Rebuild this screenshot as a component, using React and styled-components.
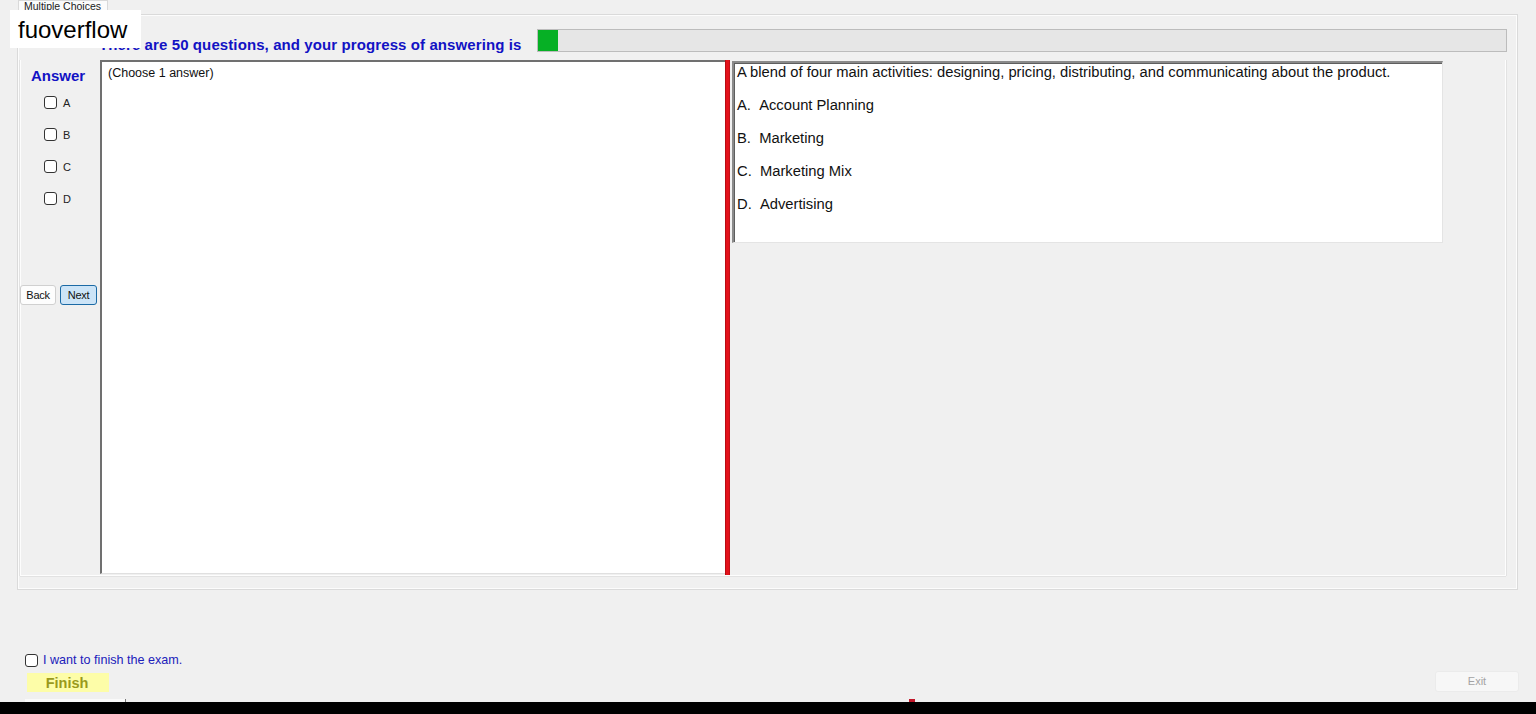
import React from "react";
import styled, { createGlobalStyle } from "styled-components";

const GlobalStyle = createGlobalStyle`
  html, body {
    margin: 0;
    padding: 0;
    background: #f0f0f0;
  }
  body {
    font-family: "Liberation Sans", Arial, sans-serif;
    overflow: hidden;
  }
`;

const OPTIONS = [
  { key: "A", text: "Account Planning" },
  { key: "B", text: "Marketing" },
  { key: "C", text: "Marketing Mix" },
  { key: "D", text: "Advertising" },
];

export default function App() {
  return (
    <>
      <GlobalStyle />
      <Page>
        <Watermark>fuoverflow</Watermark>
        <TabStrip>
          <Tab>Multiple Choices</Tab>
        </TabStrip>
        <TabPage>
          <Header>
            <Title>There are 50 questions, and your progress of answering is</Title>
            <Progress>
              <ProgressFill style={{ width: `${(1 / 50) * 100}%` }} />
            </Progress>
          </Header>
          <Body>
            <AnswerColumn>
              <AnswerLabel>Answer</AnswerLabel>
              <Choices>
                {OPTIONS.map((o) => (
                  <Choice key={o.key}>
                    <Box />
                    <span>{o.key}</span>
                  </Choice>
                ))}
              </Choices>
              <NavRow>
                <NavButton>Back</NavButton>
                <NavButton $primary>Next</NavButton>
              </NavRow>
            </AnswerColumn>
            <ListBox>(Choose 1 answer)</ListBox>
            <Splitter />
            <QuestionArea>
              <QuestionPanel>
                <Line>
                  A blend of four main activities: designing, pricing,
                  distributing, and communicating about the product.
                </Line>
                {OPTIONS.map((o) => (
                  <Line key={o.key}>
                    {o.key}.&nbsp;&nbsp;{o.text}
                  </Line>
                ))}
              </QuestionPanel>
            </QuestionArea>
          </Body>
        </TabPage>
        <Footer>
          <FinishBlock>
            <FinishCheck>
              <Box />
              <span>I want to finish the exam.</span>
            </FinishCheck>
            <FinishButton>Finish</FinishButton>
          </FinishBlock>
          <ExitButton>Exit</ExitButton>
        </Footer>
        <Strip>
          <StripTrack />
          <StripMark />
        </Strip>
        <BlackBar />
      </Page>
    </>
  );
}

const Page = styled.div`
  position: relative;
  width: 1536px;
  height: 714px;
  display: flex;
  flex-direction: column;
  background: #f0f0f0;
`;

const Watermark = styled.div`
  position: absolute;
  left: 10px;
  top: 10px;
  width: 131px;
  height: 38px;
  background: #fff;
  color: #000;
  font-size: 24px;
  line-height: 40px;
  padding-left: 8px;
  box-sizing: border-box;
  z-index: 5;
`;

const TabStrip = styled.div`
  height: 14px;
  display: flex;
  padding-left: 18px;
`;

const Tab = styled.div`
  width: 90px;
  height: 15px;
  box-sizing: border-box;
  background: #fbfbfb;
  border: 1px solid #d9d9d9;
  border-bottom: none;
  font-size: 10.5px;
  line-height: 10px;
  color: #1a1a1a;
  padding-left: 5px;
  overflow: hidden;
  position: relative;
  z-index: 1;
`;

const TabPage = styled.div`
  height: 576px;
  margin: 0 18px 0 17px;
  box-sizing: border-box;
  border: 1px solid #dadada;
  box-shadow: inset 0 0 0 1px #fcfcfc;
  display: flex;
  flex-direction: column;
`;

const Header = styled.div`
  display: flex;
  align-items: flex-end;
  padding: 14px 10px 0 81px;
  height: 23px;
  box-sizing: content-box;
`;

const Title = styled.div`
  font-size: 15px;
  font-weight: bold;
  letter-spacing: 0.1px;
  color: #1212c4;
  margin-right: 16px;
  margin-bottom: -1px;
  white-space: nowrap;
`;

const Progress = styled.div`
  flex: 1;
  height: 23px;
  box-sizing: border-box;
  background: #e6e6e6;
  border: 1px solid #bcbcbc;
`;

const ProgressFill = styled.div`
  height: 100%;
  background: #06b025;
`;

const Body = styled.div`
  display: flex;
  height: 515px;
  margin: 8px 11px 0 2px;
  border-left: 1px solid #fdfdfd;
  border-right: 1px solid #fdfdfd;
  border-bottom: 1px solid #fdfdfd;
  box-shadow: -1px 0 0 #e2e2e2, 1px 0 0 #e2e2e2, 0 1px 0 #e2e2e2;
`;

const AnswerColumn = styled.div`
  width: 79px;
  flex-shrink: 0;
  display: flex;
  flex-direction: column;
  padding-top: 7px;
  box-sizing: border-box;
`;

const AnswerLabel = styled.div`
  font-size: 15px;
  font-weight: bold;
  color: #1212c4;
  line-height: 17px;
  padding-left: 10px;
`;

const Choices = styled.div`
  display: flex;
  flex-direction: column;
  gap: 19px;
  margin-top: 12px;
  padding-left: 23px;
`;

const Choice = styled.label`
  display: flex;
  align-items: center;
  gap: 6px;
  height: 13px;
  font-size: 11px;
  color: #222;
`;

const Box = styled.span`
  width: 13px;
  height: 13px;
  box-sizing: border-box;
  border: 1px solid #333;
  border-radius: 3px;
  background: #fff;
  flex-shrink: 0;
`;

const NavRow = styled.div`
  display: flex;
  gap: 4px;
  margin-top: 80px;
  margin-left: -1px;
`;

const NavButton = styled.button`
  height: 20px;
  width: ${(p) => (p.$primary ? "37px" : "36px")};
  padding: 0;
  box-sizing: border-box;
  font-family: "Liberation Sans", Arial, sans-serif;
  font-size: 11px;
  letter-spacing: -0.3px;
  color: #111;
  border-radius: 3px;
  border: 1px solid ${(p) => (p.$primary ? "#1b6aa5" : "#d0d0d0")};
  background: ${(p) => (p.$primary ? "#cce4f7" : "#fdfdfd")};
`;

const ListBox = styled.div`
  width: 625px;
  flex-shrink: 0;
  box-sizing: border-box;
  background: #fff;
  border-top: 2px solid #707070;
  border-left: 2px solid #707070;
  border-bottom: 1px solid #e0e0e0;
  font-size: 12.5px;
  color: #111;
  padding: 4px 0 0 6px;
  height: 514px;
`;

const Splitter = styled.div`
  width: 5px;
  flex-shrink: 0;
  background: #e3121b;
  box-shadow: inset 1px 0 0 #b80c12, inset -1px 0 0 #c40f16;
`;

const QuestionArea = styled.div`
  flex: 1;
  padding: 1px 0 0 2px;
`;

const QuestionPanel = styled.div`
  width: 711px;
  height: 182px;
  box-sizing: border-box;
  background: #fff;
  border-top: 2px solid #8a8a8a;
  border-left: 2px solid #8a8a8a;
  border-right: 1px solid #e4e4e4;
  border-bottom: 1px solid #e4e4e4;
  box-shadow: inset 1px 1px 0 #5e5e5e;
  padding: 1px 0 0 3px;
`;

const Line = styled.div`
  font-size: 14.75px;
  line-height: 16px;
  color: #111;
  margin-bottom: 17px;
  white-space: nowrap;
`;

const Footer = styled.div`
  height: 108px;
  display: flex;
  justify-content: space-between;
  align-items: flex-end;
  padding: 0 17px 6px 25px;
  box-sizing: border-box;
`;

const FinishBlock = styled.div`
  display: flex;
  flex-direction: column;
  gap: 6px;
`;

const FinishCheck = styled.label`
  display: flex;
  align-items: center;
  gap: 5px;
  font-size: 12.6px;
  color: #2020bb;
`;

const FinishButton = styled.div`
  width: 82px;
  height: 19px;
  margin-left: 2px;
  background: #fdfda8;
  color: #9a9a1c;
  font-size: 14.5px;
  font-weight: bold;
  line-height: 20px;
  text-align: center;
  padding-right: 2px;
  box-sizing: border-box;
`;

const ExitButton = styled.div`
  width: 84px;
  height: 21px;
  box-sizing: border-box;
  background: #f7f7f7;
  border: 1px solid #ebebeb;
  border-radius: 3px;
  color: #a4a4a4;
  font-size: 11px;
  line-height: 19px;
  text-align: center;
`;

const Strip = styled.div`
  position: relative;
  height: 4px;
  display: flex;
`;

const StripTrack = styled.div`
  margin-left: 25px;
  width: 100px;
  height: 3px;
  margin-top: 1px;
  background: #fafafa;
  border-right: 1px solid #777;
`;

const StripMark = styled.div`
  margin-left: 783px;
  width: 6px;
  height: 3px;
  margin-top: 1px;
  background: #c2182a;
`;

const BlackBar = styled.div`
  height: 12px;
  background: #000;
`;
